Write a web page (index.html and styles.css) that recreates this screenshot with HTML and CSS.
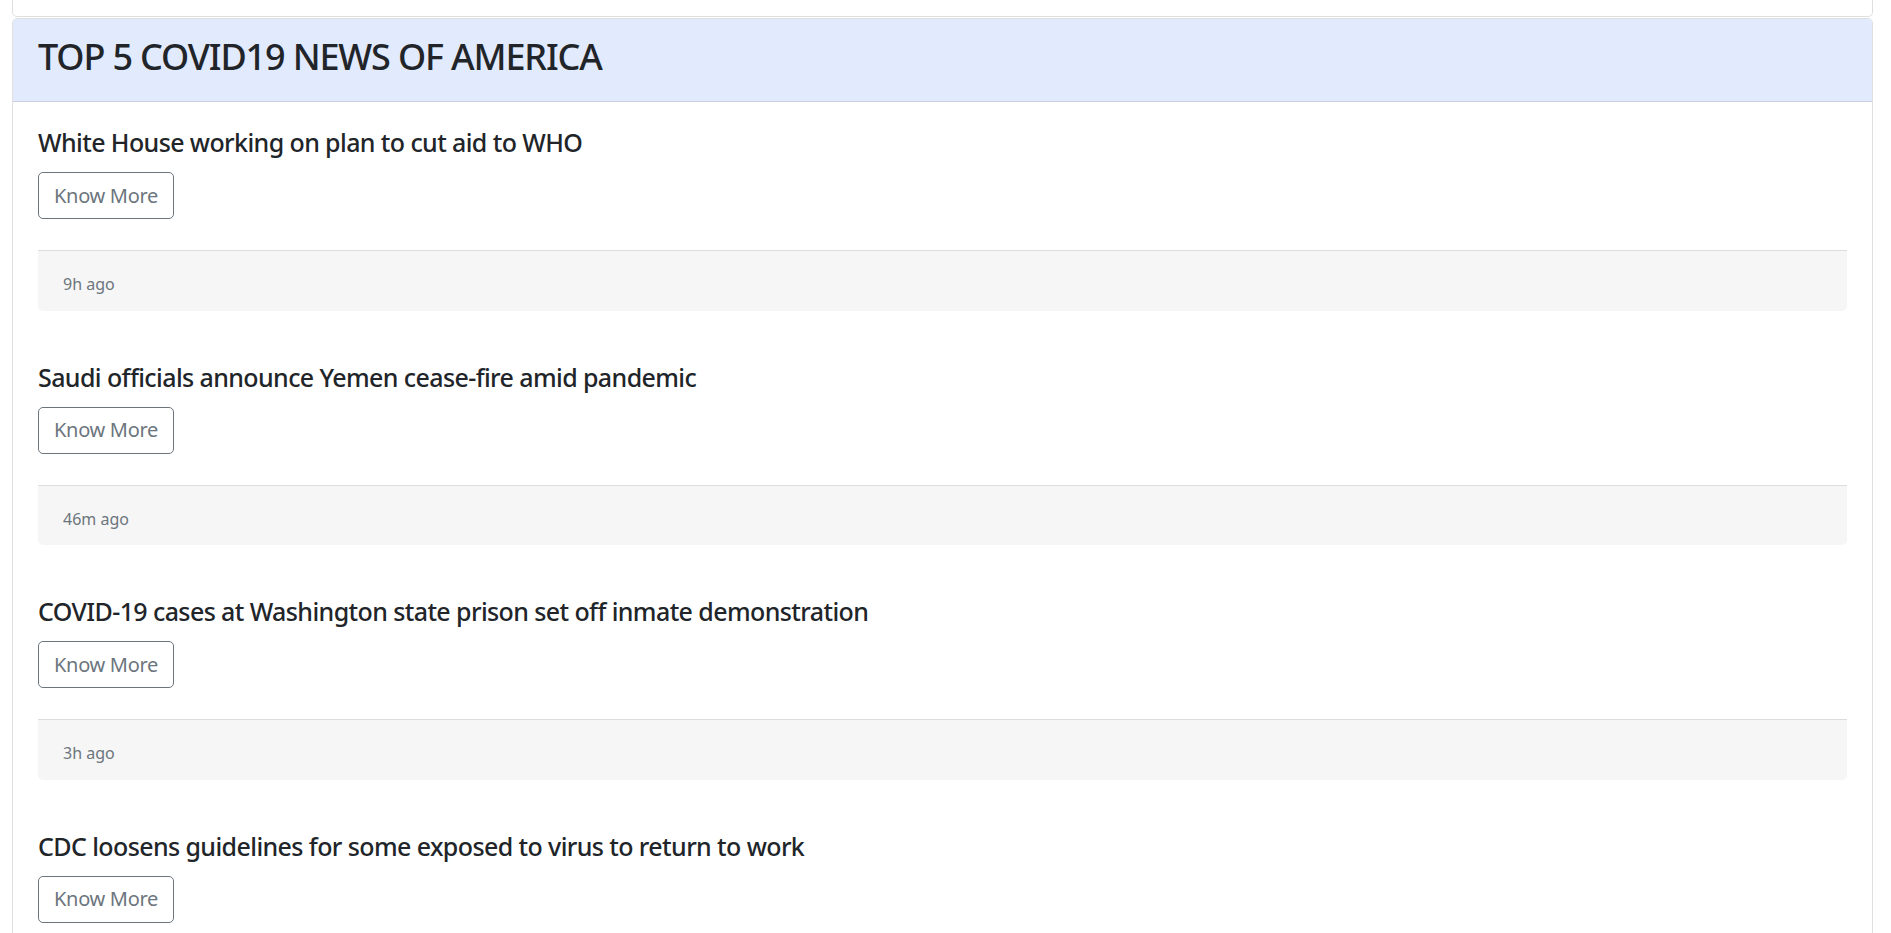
FILE: index.html
```html
<!DOCTYPE html>
<html lang="en">
<head>
<meta charset="utf-8">
<title>Top 5 COVID19 News of America</title>
<link rel="stylesheet" href="styles.css">
</head>
<body>
<div class="page">
  <div class="top-card"></div>
  <section class="card">
    <header class="card-header">
      <h3 class="card-heading">TOP 5 COVID19 NEWS OF AMERICA</h3>
    </header>
    <div class="card-body">
      <article class="news-item">
        <h5 class="news-title">White House working on plan to cut aid to WHO</h5>
        <a class="btn-outline" href="#">Know More</a>
        <div class="news-footer"><small>9h ago</small></div>
      </article>
      <article class="news-item">
        <h5 class="news-title">Saudi officials announce Yemen cease-fire amid pandemic</h5>
        <a class="btn-outline" href="#">Know More</a>
        <div class="news-footer"><small>46m ago</small></div>
      </article>
      <article class="news-item">
        <h5 class="news-title">COVID-19 cases at Washington state prison set off inmate demonstration</h5>
        <a class="btn-outline" href="#">Know More</a>
        <div class="news-footer"><small>3h ago</small></div>
      </article>
      <article class="news-item">
        <h5 class="news-title">CDC loosens guidelines for some exposed to virus to return to work</h5>
        <a class="btn-outline" href="#">Know More</a>
        <div class="news-footer"><small>1h ago</small></div>
      </article>
      <article class="news-item">
        <h5 class="news-title">Coronavirus cases continue to climb across the country</h5>
        <a class="btn-outline" href="#">Know More</a>
        <div class="news-footer"><small>2h ago</small></div>
      </article>
    </div>
  </section>
</div>
</body>
</html>
```
FILE: styles.css
```css
* { box-sizing: border-box; }

html, body {
  margin: 0;
  padding: 0;
  background: #ffffff;
}

body {
  font-family: "Noto Sans", "Open Sans", "DejaVu Sans", sans-serif;
  font-size: 20px;
  line-height: 1.5;
  color: #212529;
}

.page {
  padding: 0 18px 0 12px;
}

.top-card {
  height: 17px;
  border: 1px solid #dfdfdf;
  border-top: 0;
  border-radius: 0 0 5px 5px;
  margin-bottom: 1px;
}

.card {
  border: 1px solid #dfdfdf;
  border-radius: 5px;
  background: #ffffff;
}

.card-header {
  background: #e2eafd;
  border-bottom: 1px solid #c8d0e2;
  border-radius: 4px 4px 0 0;
  padding: 17px 25px 13px;
}

.card-heading {
  margin: 0 0 10px;
  font-size: 36px;
  font-weight: 500;
  line-height: 42px;
  letter-spacing: -1.15px;
}

.card-body {
  padding: 25px;
}

.news-item {
  margin-bottom: 51px;
}

.news-title {
  margin: 0 0 15px;
  font-size: 25px;
  font-weight: 500;
  line-height: 30px;
  letter-spacing: -0.6px;
}

.btn-outline {
  display: inline-block;
  padding: 7.5px 15px;
  font-size: 20px;
  line-height: 30px;
  color: #6c757d;
  text-decoration: none;
  border: 1px solid #6c757d;
  border-radius: 5px;
  letter-spacing: -0.3px;
}

.news-footer {
  margin-top: 31px;
  height: 60.5px;
  padding: 20px 25px 0;
  background: #f6f6f6;
  border-top: 1px solid #dcdcdc;
  border-radius: 0 0 5px 5px;
  line-height: 24px;
}

.news-footer small {
  font-size: 16px;
  color: #6c757d;
}
```
